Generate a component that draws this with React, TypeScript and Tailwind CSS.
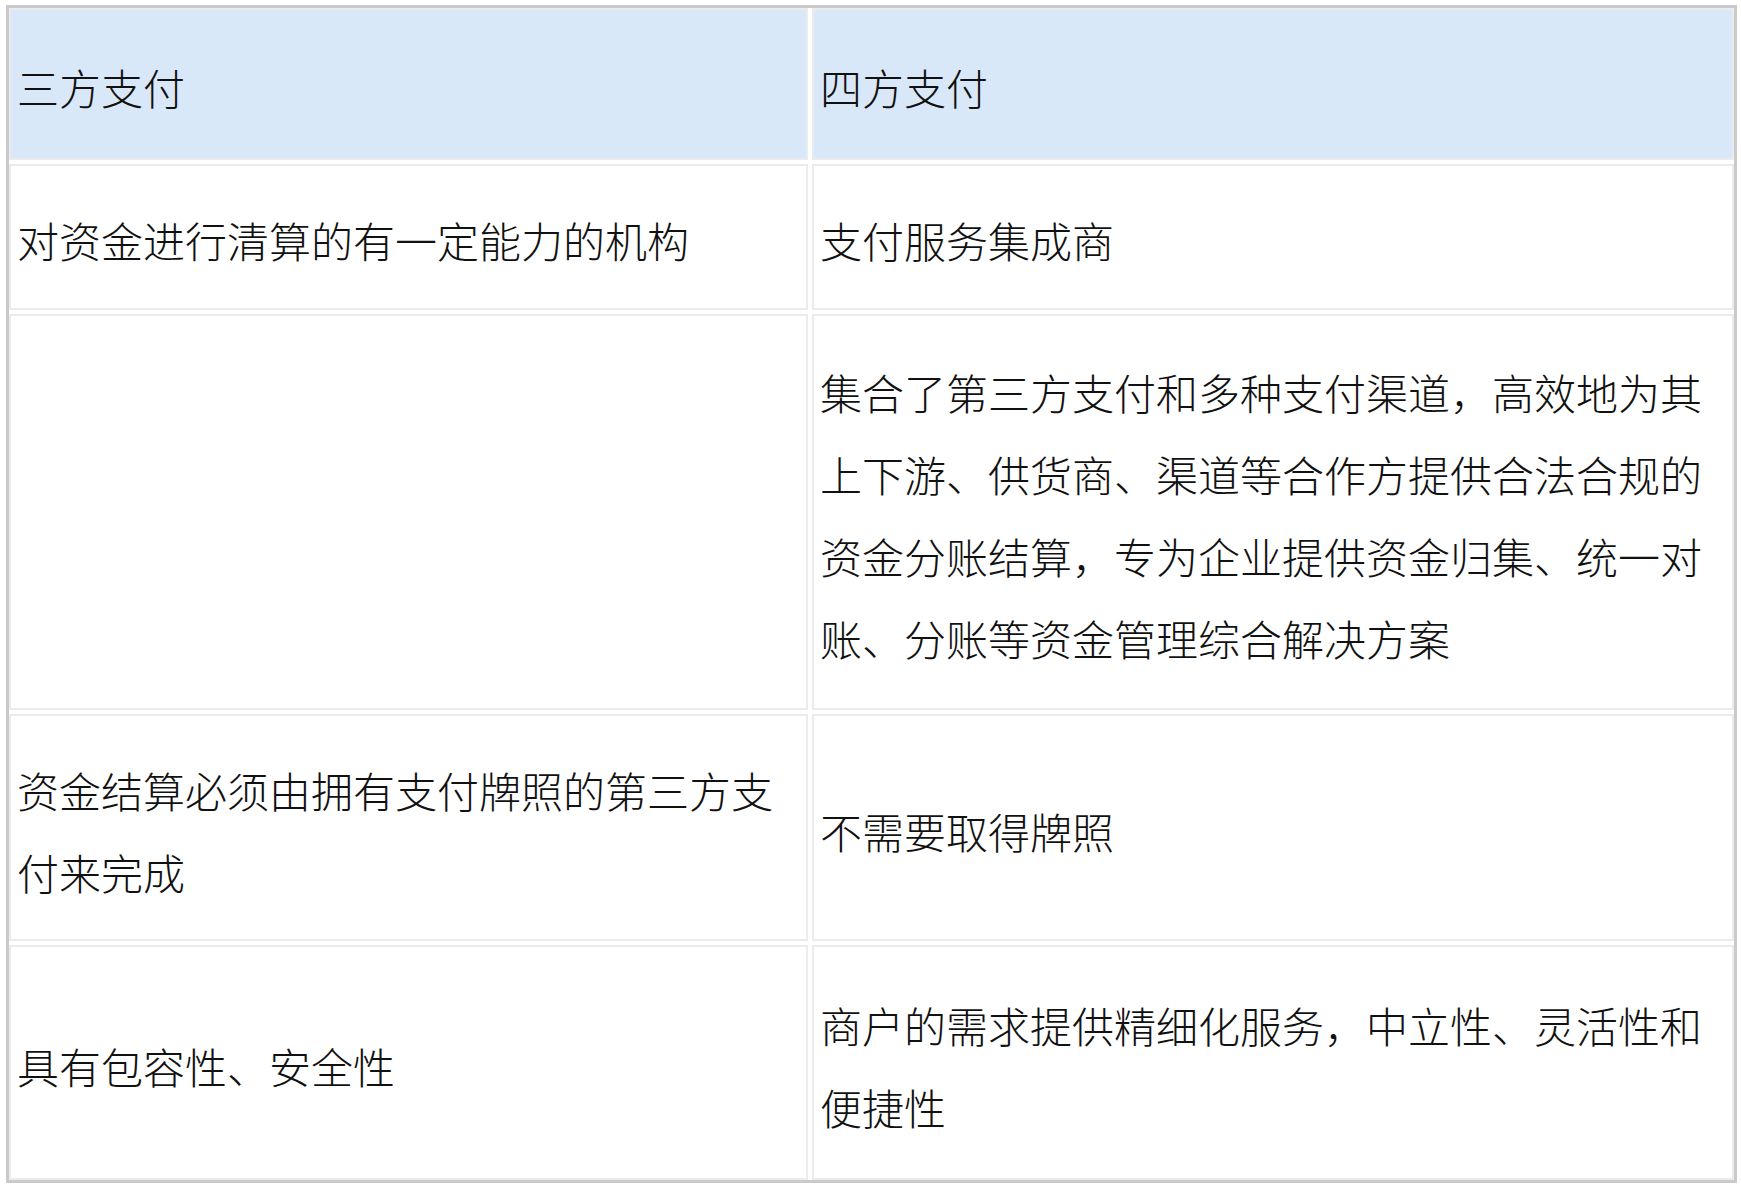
const rows: { h: string; left: string; right: string; head?: boolean }[] = [
  { h: "h-[152px]", left: "三方支付", right: "四方支付", head: true },
  { h: "h-[146px]", left: "对资金进行清算的有一定能力的机构", right: "支付服务集成商" },
  {
    h: "h-[396px]",
    left: "",
    right:
      "集合了第三方支付和多种支付渠道，高效地为其上下游、供货商、渠道等合作方提供合法合规的资金分账结算，专为企业提供资金归集、统一对账、分账等资金管理综合解决方案",
  },
  { h: "h-[227px]", left: "资金结算必须由拥有支付牌照的第三方支付来完成", right: "不需要取得牌照" },
  { h: "h-[235px]", left: "具有包容性、安全性", right: "商户的需求提供精细化服务，中立性、灵活性和便捷性" },
];

function Cell({ text, head, h }: { text: string; head?: boolean; h: string }) {
  return (
    <div
      className={`${h} flex items-center border-2 border-[#ebebeb] pl-[6px] pr-1 pt-[6px] ${
        head ? "bg-[#d9e8f8]" : "bg-white"
      }`}
    >
      <p className="text-[42px] leading-[82px] font-light text-[#111]">{text}</p>
    </div>
  );
}

export default function App() {
  return (
    <div
      className="w-[1741px] h-[1188px] bg-white pl-[6px] pt-[5px]"
      style={{ fontFamily: '"Noto Sans CJK SC", "Liberation Serif", serif' }}
    >
      <div className="w-[1731px] border-[3px] border-[#cacaca] bg-white">
        <div className="grid grid-cols-[799px_1fr] gap-[4px]">
          {rows.map((r, i) => (
            <div key={i} className="contents">
              <Cell text={r.left} head={r.head} h={r.h} />
              <Cell text={r.right} head={r.head} h={r.h} />
            </div>
          ))}
        </div>
      </div>
    </div>
  );
}
